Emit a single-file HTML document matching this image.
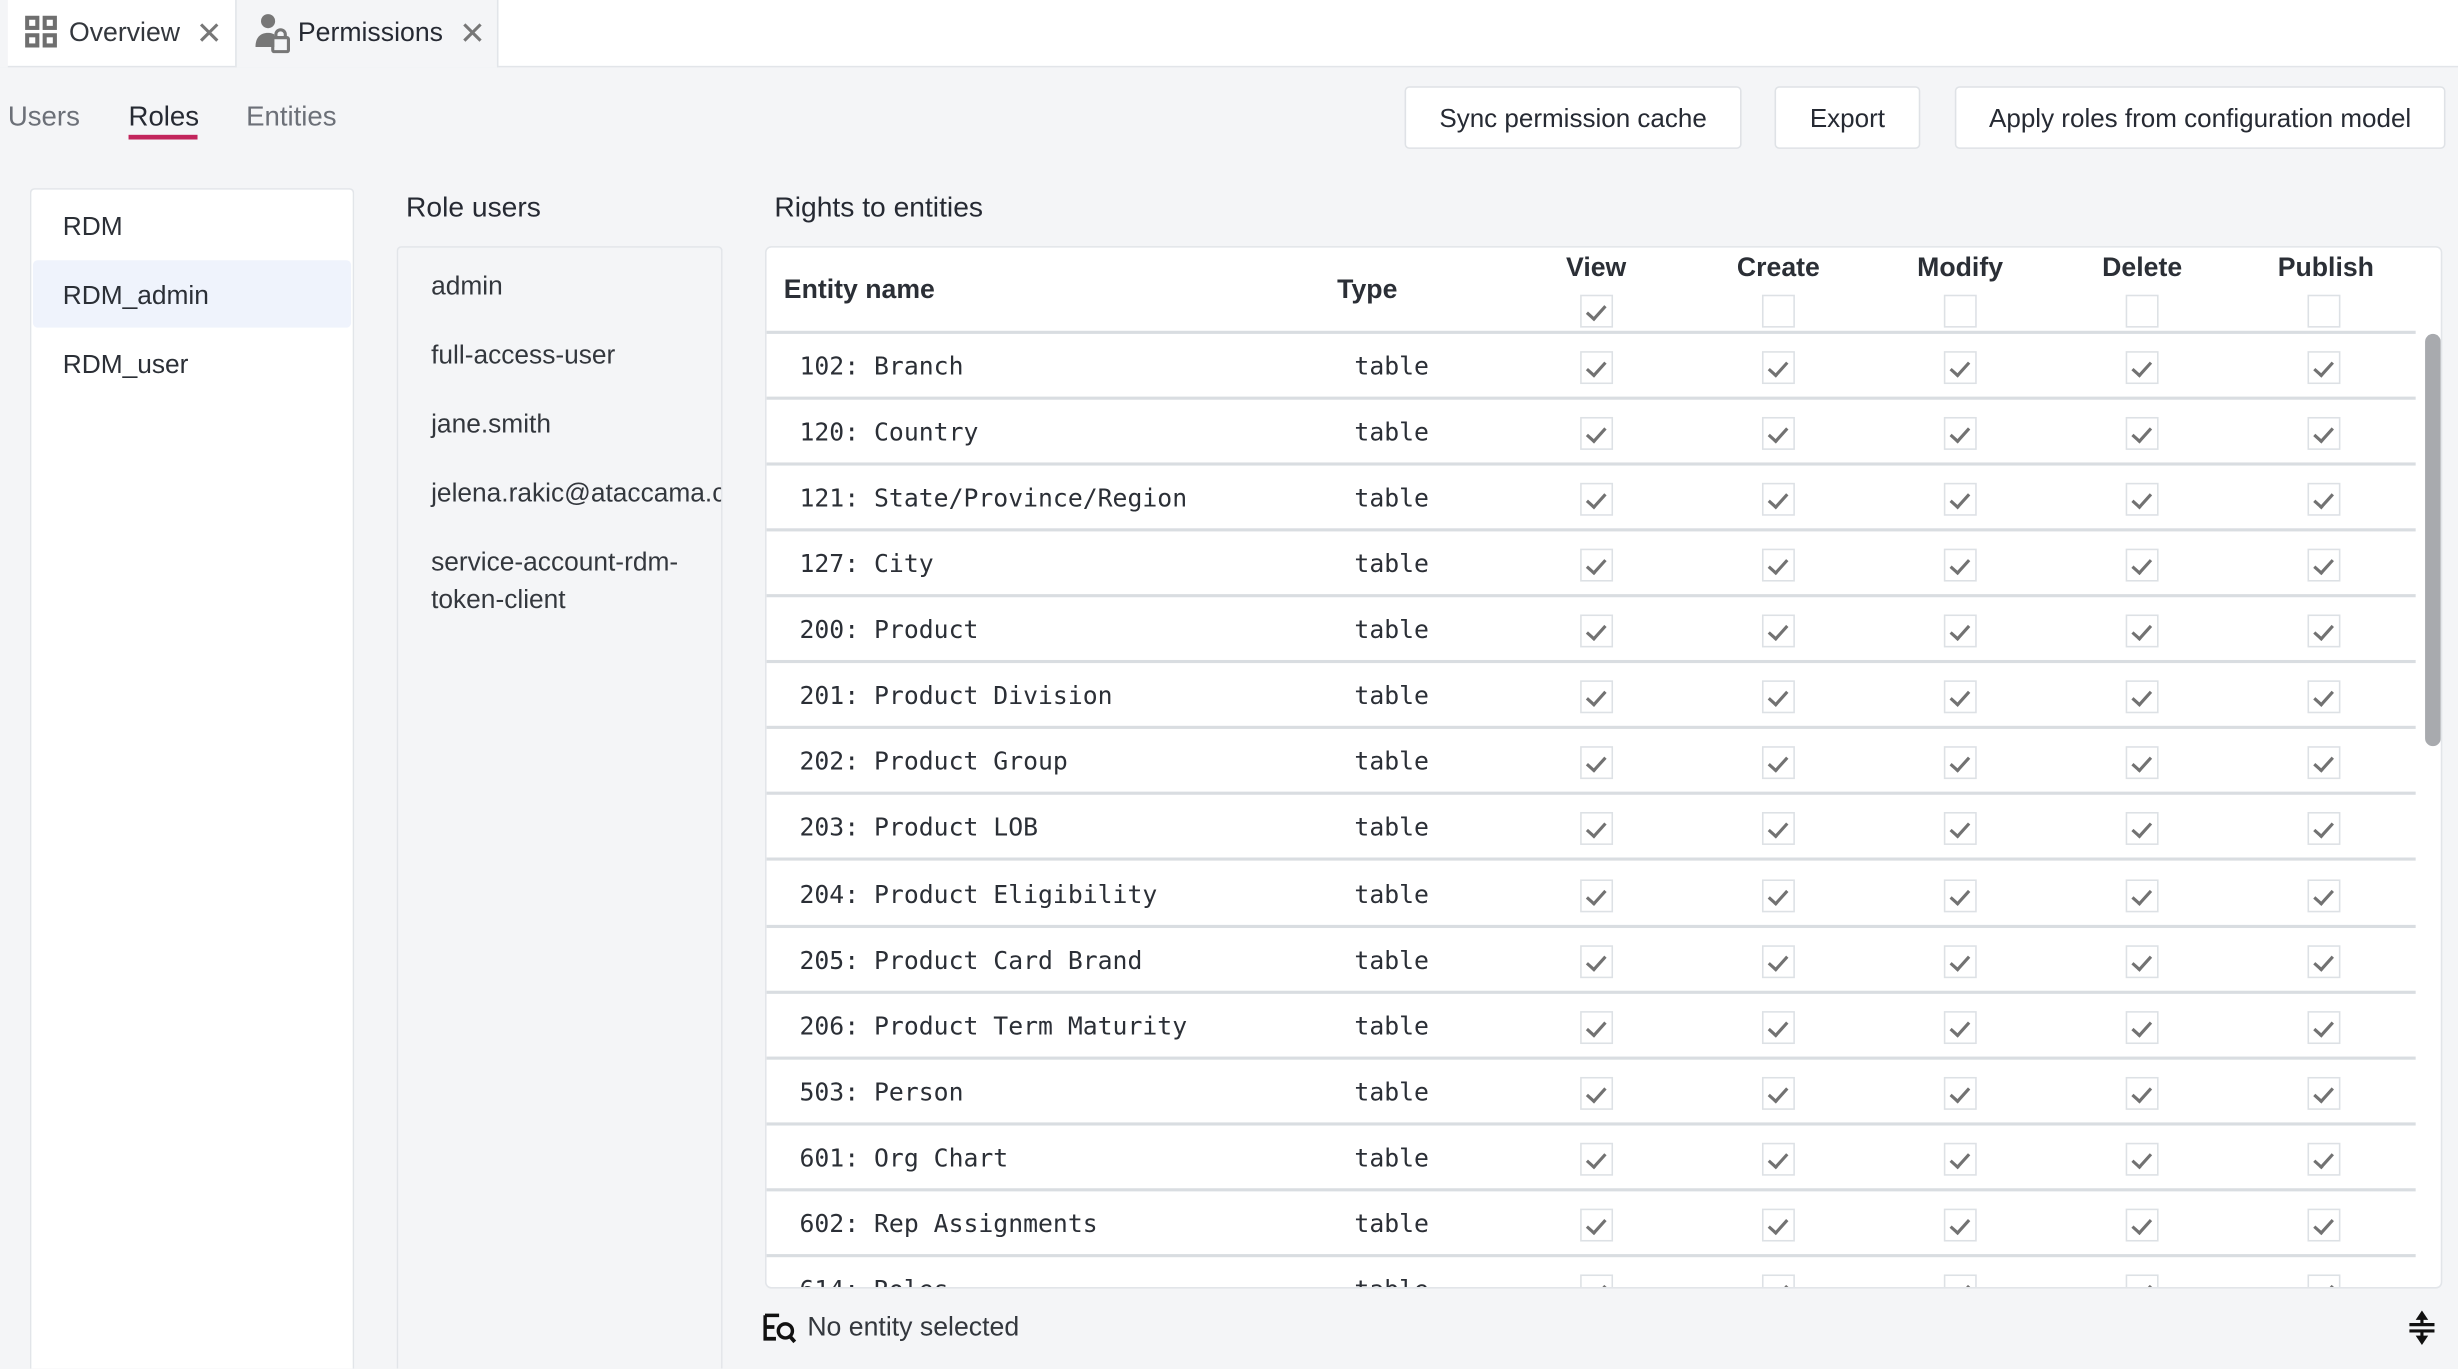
<!DOCTYPE html>
<html><head><meta charset="utf-8"><style>
html,body{margin:0;padding:0;width:2458px;height:1368px;overflow:hidden;background:#f4f5f7}
#w{position:absolute;left:0;top:0;width:1568px;height:873px;transform:scale(1.5676);transform-origin:0 0;font-family:"Liberation Sans",sans-serif;color:#2b2f36;overflow:hidden}
.a{position:absolute;white-space:nowrap}
.tabbar{position:absolute;left:0;top:0;width:1568px;height:42px;background:#fff;border-bottom:1px solid #e2e5e9}
.btn{position:absolute;top:55px;height:40px;background:#fff;border:1px solid #dfe2e6;border-radius:3px;box-sizing:border-box;font-size:16.6px;line-height:39px;text-align:center;color:#262a33}
.panel{position:absolute;box-sizing:border-box;border:1px solid #e2e5e9;border-bottom:none;border-radius:3px 3px 0 0}
.it{position:absolute;left:20px;font-size:16.8px}
.ru{position:absolute;left:21px;font-size:16.8px;color:#33373d}
.tbl{position:absolute;left:488px;top:157px;width:1070px;height:665px;background:#fff;border:1px solid #e2e5e9;border-radius:4px;box-sizing:border-box;overflow:hidden}
.hd{position:absolute;font-size:17px;font-weight:bold;color:#2b2f36}
.row{position:absolute;left:0;width:1052px;height:42px;border-bottom:2px solid #d9dde1;box-sizing:border-box}
.nm{position:absolute;left:21px;top:11px;font-family:"DejaVu Sans Mono","Liberation Mono",monospace;font-size:15.8px;color:#2b2f36;white-space:nowrap}
.ty{position:absolute;left:375px;top:11px;font-family:"DejaVu Sans Mono","Liberation Mono",monospace;font-size:15.8px;color:#2b2f36}
.cb{position:absolute;width:21px;height:21px;border:1.5px solid #dde1e5;box-sizing:border-box;background:#fff}
.k::after{content:"";position:absolute;left:6px;top:2.5px;width:4.5px;height:9.5px;border-right:2px solid #727272;border-bottom:2px solid #727272;transform:rotate(42deg)}
.r .cb{top:11px}
.c1{left:519px}.c2{left:635px}.c3{left:751px}.c4{left:867px}.c5{left:983px}
</style></head><body><div id="w">
<div class="tabbar"></div>
<div class="a" style="left:0;top:0;width:5px;height:43px;background:#f4f5f7"></div>
<div class="a" style="left:150px;top:0;width:168px;height:43px;background:#f4f5f7;border-left:1px solid #e2e5e9;border-right:1px solid #e2e5e9;box-sizing:border-box"></div>
<svg class="a" style="left:16px;top:10px" width="21" height="21" viewBox="0 0 21 21" fill="none" stroke="#6f6f6f" stroke-width="2.6"><rect x="1.3" y="1.3" width="6.5" height="6.5"/><rect x="12.5" y="1.3" width="6.5" height="6.5"/><rect x="1.3" y="12.5" width="6.5" height="6.5"/><rect x="12.5" y="12.5" width="6.5" height="6.5"/></svg>
<div class="a" style="left:44px;top:11px;font-size:17px;color:#33373d">Overview</div>
<div class="a" style="left:125px;top:9px;font-size:20px;color:#777">✕</div>
<svg class="a" style="left:162px;top:8px" width="24" height="26" viewBox="0 0 24 26"><circle cx="9" cy="5.5" r="4.5" fill="#777"/><path d="M1 22c0-6 3-9 8-9 2 0 3 .5 4 1v8z" fill="#777"/><rect x="12" y="16" width="10" height="9" rx="1" fill="none" stroke="#777" stroke-width="2"/><path d="M14 16v-2a3 3 0 0 1 6 0v2" fill="none" stroke="#777" stroke-width="2"/></svg>
<div class="a" style="left:190px;top:11px;font-size:17px;color:#262a33">Permissions</div>
<div class="a" style="left:293px;top:9px;font-size:20px;color:#777">✕</div>

<div class="a" style="left:5px;top:64px;font-size:17.6px;color:#6c7078">Users</div>
<div class="a" style="left:82px;top:64px;font-size:17.6px;color:#262a33">Roles</div>
<div class="a" style="left:82px;top:86px;width:44px;height:3px;background:#c2255c"></div>
<div class="a" style="left:157px;top:64px;font-size:17.6px;color:#6c7078">Entities</div>

<div class="btn" style="left:896px;width:215px">Sync permission cache</div>
<div class="btn" style="left:1132px;width:93px">Export</div>
<div class="btn" style="left:1247px;width:313px">Apply roles from configuration model</div>

<div class="panel" style="left:19px;top:120px;width:207px;height:753px;background:#fff">
<div class="it" style="top:14px">RDM</div>
<div class="a" style="left:1px;top:45px;width:203px;height:43px;background:#eff3fc;border-radius:3px"></div>
<div class="it" style="top:58px">RDM_admin</div>
<div class="it" style="top:102px">RDM_user</div>
</div>

<div class="a" style="left:259px;top:122px;font-size:18px;color:#262a33">Role users</div>
<div class="panel" style="left:253px;top:157px;width:208px;height:716px;background:#f4f5f7;overflow:hidden">
<div class="ru" style="top:15px">admin</div>
<div class="ru" style="top:59px">full-access-user</div>
<div class="ru" style="top:103px">jane.smith</div>
<div class="ru" style="top:147px">jelena.rakic@ataccama.com</div>
<div class="ru" style="top:189px;line-height:24px;white-space:normal;width:180px">service-account-rdm-token-client</div>
</div>

<div class="a" style="left:494px;top:122px;font-size:18px;color:#262a33">Rights to entities</div>
<div class="tbl">
<div class="hd" style="left:11px;top:17px">Entity name</div>
<div class="hd" style="left:364px;top:17px">Type</div>
<div class="hd" style="left:510px;top:3px">View</div>
<div class="hd" style="left:619px;top:3px">Create</div>
<div class="hd" style="left:734px;top:3px">Modify</div>
<div class="hd" style="left:852px;top:3px">Delete</div>
<div class="hd" style="left:964px;top:3px">Publish</div>
<div class="cb k c1" style="top:30px"></div><div class="cb c2" style="top:30px"></div><div class="cb c3" style="top:30px"></div><div class="cb c4" style="top:30px"></div><div class="cb c5" style="top:30px"></div>
<div class="a" style="left:0;top:53px;width:1052px;height:2px;background:#d9dde1"></div>

<div class="row r" style="top:55px"><div class="nm">102: Branch</div><div class="ty">table</div><div class="cb k c1"></div><div class="cb k c2"></div><div class="cb k c3"></div><div class="cb k c4"></div><div class="cb k c5"></div></div>
<div class="row r" style="top:97px"><div class="nm">120: Country</div><div class="ty">table</div><div class="cb k c1"></div><div class="cb k c2"></div><div class="cb k c3"></div><div class="cb k c4"></div><div class="cb k c5"></div></div>
<div class="row r" style="top:139px"><div class="nm">121: State/Province/Region</div><div class="ty">table</div><div class="cb k c1"></div><div class="cb k c2"></div><div class="cb k c3"></div><div class="cb k c4"></div><div class="cb k c5"></div></div>
<div class="row r" style="top:181px"><div class="nm">127: City</div><div class="ty">table</div><div class="cb k c1"></div><div class="cb k c2"></div><div class="cb k c3"></div><div class="cb k c4"></div><div class="cb k c5"></div></div>
<div class="row r" style="top:223px"><div class="nm">200: Product</div><div class="ty">table</div><div class="cb k c1"></div><div class="cb k c2"></div><div class="cb k c3"></div><div class="cb k c4"></div><div class="cb k c5"></div></div>
<div class="row r" style="top:265px"><div class="nm">201: Product Division</div><div class="ty">table</div><div class="cb k c1"></div><div class="cb k c2"></div><div class="cb k c3"></div><div class="cb k c4"></div><div class="cb k c5"></div></div>
<div class="row r" style="top:307px"><div class="nm">202: Product Group</div><div class="ty">table</div><div class="cb k c1"></div><div class="cb k c2"></div><div class="cb k c3"></div><div class="cb k c4"></div><div class="cb k c5"></div></div>
<div class="row r" style="top:349px"><div class="nm">203: Product LOB</div><div class="ty">table</div><div class="cb k c1"></div><div class="cb k c2"></div><div class="cb k c3"></div><div class="cb k c4"></div><div class="cb k c5"></div></div>
<div class="row r" style="top:392px"><div class="nm">204: Product Eligibility</div><div class="ty">table</div><div class="cb k c1"></div><div class="cb k c2"></div><div class="cb k c3"></div><div class="cb k c4"></div><div class="cb k c5"></div></div>
<div class="row r" style="top:434px"><div class="nm">205: Product Card Brand</div><div class="ty">table</div><div class="cb k c1"></div><div class="cb k c2"></div><div class="cb k c3"></div><div class="cb k c4"></div><div class="cb k c5"></div></div>
<div class="row r" style="top:476px"><div class="nm">206: Product Term Maturity</div><div class="ty">table</div><div class="cb k c1"></div><div class="cb k c2"></div><div class="cb k c3"></div><div class="cb k c4"></div><div class="cb k c5"></div></div>
<div class="row r" style="top:518px"><div class="nm">503: Person</div><div class="ty">table</div><div class="cb k c1"></div><div class="cb k c2"></div><div class="cb k c3"></div><div class="cb k c4"></div><div class="cb k c5"></div></div>
<div class="row r" style="top:560px"><div class="nm">601: Org Chart</div><div class="ty">table</div><div class="cb k c1"></div><div class="cb k c2"></div><div class="cb k c3"></div><div class="cb k c4"></div><div class="cb k c5"></div></div>
<div class="row r" style="top:602px"><div class="nm">602: Rep Assignments</div><div class="ty">table</div><div class="cb k c1"></div><div class="cb k c2"></div><div class="cb k c3"></div><div class="cb k c4"></div><div class="cb k c5"></div></div>
<div class="row r" style="top:644px;border:none"><div class="nm">614: Roles</div><div class="ty">table</div><div class="cb k c1"></div><div class="cb k c2"></div><div class="cb k c3"></div><div class="cb k c4"></div><div class="cb k c5"></div></div>

<div class="a" style="left:1058px;top:55px;width:10px;height:263px;background:#a8aaae;border-radius:5px"></div>
</div>

<svg class="a" style="left:487px;top:838px" width="22" height="19" viewBox="0 0 22 19"><path d="M1 1h9M1 1v15h7M1 8.5h6" stroke="#111" stroke-width="2.4" fill="none"/><circle cx="14" cy="11" r="4.5" stroke="#111" stroke-width="2.2" fill="none"/><path d="M16.5 14l3.5 4" stroke="#111" stroke-width="2.4"/></svg>
<div class="a" style="left:515px;top:837px;font-size:17px;color:#33373d">No entity selected</div>
<svg class="a" style="left:1536px;top:836px" width="18" height="22" viewBox="0 0 18 22"><path d="M9 0l-4 6h8z M9 22l-4-6h8z" fill="#111"/><path d="M1 9h16M1 13h16M9 5v3M9 14v3" stroke="#111" stroke-width="2"/></svg>
</div></body></html>
